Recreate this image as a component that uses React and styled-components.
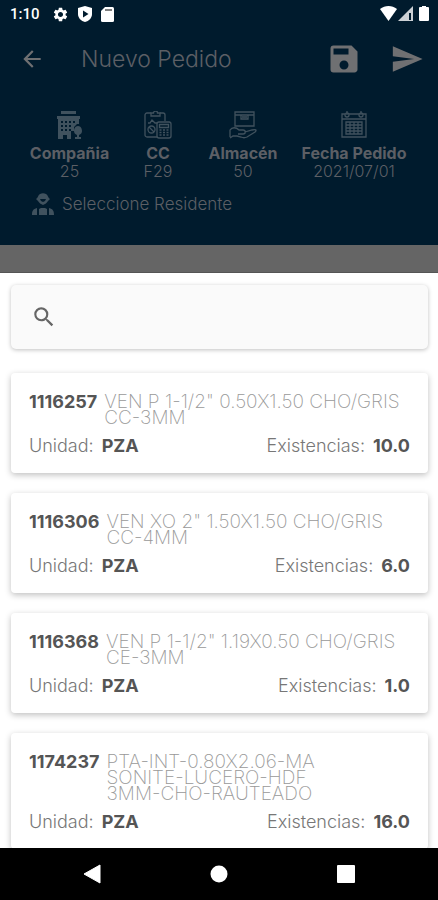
import React, { useState } from "react"
import styled, { createGlobalStyle } from "styled-components"
import { MdArrowBack, MdSave, MdSearch, MdSend, MdSettings } from "react-icons/md"

const articulos = [
  {
    clave: "1116257",
    descripcion: ['VEN P 1-1/2" 0.50X1.50 CHO/GRIS', "CC-3MM"],
    unidad: "PZA",
    existencias: "10.0",
  },
  {
    clave: "1116306",
    descripcion: ['VEN XO 2" 1.50X1.50 CHO/GRIS', "CC-4MM"],
    unidad: "PZA",
    existencias: "6.0",
  },
  {
    clave: "1116368",
    descripcion: ['VEN P 1-1/2" 1.19X0.50 CHO/GRIS', "CE-3MM"],
    unidad: "PZA",
    existencias: "1.0",
  },
  {
    clave: "1174237",
    descripcion: ["PTA-INT-0.80X2.06-MA", "SONITE-LUCERO-HDF", "3MM-CHO-RAUTEADO"],
    unidad: "PZA",
    existencias: "16.0",
  },
]

const CompaniaIcon = () => (
  <svg width="28" height="28" viewBox="0 0 28 28" fill="currentColor" aria-hidden="true">
    <path d="M5 0h15v3H5zM1 5h23v3H1z" />
    <path
      fillRule="evenodd"
      d="M2 8h21v5h-2l-3 3v4h-3v8h-4v-4H7v4H2zM5 10v2h2v-2zM9 10v2h2v-2zM13 10v2h2v-2zM17 10v2h2v-2zM5 14v2h2v-2zM9 14v2h2v-2zM13 14v2h2v-2zM5 18v2h2v-2zM9 18v2h2v-2zM13 18v2h2v-2z"
    />
    <path d="M22 15c3 0 4 3 4 5s-1 3-3 4v2h2v2h-6v-2h2v-2c-2-1-3-2-3-4s1-5 4-5z" />
  </svg>
)

const CentroIcon = () => (
  <svg width="28" height="28" viewBox="0 0 28 28" fill="none" stroke="currentColor" strokeWidth="1.3" aria-hidden="true">
    <path d="M13 26H3a2 2 0 0 1-2-2V4a2 2 0 0 1 2-2h4M16 2h3a2 2 0 0 1 2 2v6" />
    <path d="M7 5V2h2.500a2 2 0 0 1 4 0H16v3zM4 12h2l2-3 3 3h2" />
    <circle cx="7.500" cy="18.500" r="3.500" />
    <path d="m5 16 5 5" />
    <rect x="13" y="11" width="14" height="16" rx="2" />
    <path d="M15.500 13.500h9v3h-9zM15.500 19h2M19 19h2M22.500 19h2M15.500 21.500h2M19 21.500h2M22.500 21.500h2M15.500 24h2M19 24h2M22.500 24h2" />
  </svg>
)

const AlmacenIcon = () => (
  <svg width="28" height="28" viewBox="0 0 28 28" fill="none" stroke="currentColor" strokeWidth="1.3" aria-hidden="true">
    <path d="M6 1h19v14H6zM6 4h19M12 4v4h7V4M13 6h5" />
    <path d="M1 26v-7c2-3 6-3 9 0h4c3 0 3 4 0 4h-5M16 21l7-2c4-1 5 0 3 2l-8 5c-2 1-4 1-6 0l-4-1H4l-3 2" />
  </svg>
)

const FechaIcon = () => (
  <svg width="28" height="28" viewBox="0 0 28 28" fill="none" stroke="currentColor" strokeWidth="1.3" aria-hidden="true">
    <path d="M5 3H2v23h24V3h-3M9 3h10M2 8h24" />
    <circle cx="7" cy="4" r="2" />
    <circle cx="21" cy="4" r="2" />
    <path d="M7 0v4M21 0v4M6 11h16v12H6zM6 14h16M6 17h16M6 20h16M10 11v12M14 11v12M18 11v12" />
  </svg>
)

const ResidenteIcon = () => (
  <svg width="22" height="22" viewBox="0 0 22 22" fill="currentColor" aria-hidden="true">
    <path d="M4 6c2-1 2-4 4-5 2-1 4-1 6 0 2 1 2 4 4 5l-2 2c-1 2-3 3-5 4-2-1-4-2-5-4z" />
    <path d="M8 6h6l-1 2-2 1-2-1z" fill="#001b2d" />
    <path d="M0 22c0-4 1-6 5-7v7zM7 16l2-1h4l2 1v6H7zM17 15c4 1 5 3 5 7h-5z" />
  </svg>
)

const ShieldIcon = () => (
  <svg width="16" height="16" viewBox="0 0 16 16" aria-hidden="true">
    <path d="M8 0l7 2v6c0 4-3 7-7 8-4-1-7-4-7-8V2z" fill="#fff" />
    <path d="M6 4.500v7L11.500 8z" fill="#001b2d" />
  </svg>
)

const CardIcon = () => (
  <svg width="13" height="15" viewBox="0 0 13 15" aria-hidden="true">
    <path d="M4 0h7.500A1.500 1.500 0 0 1 13 1.500v12a1.500 1.500 0 0 1-1.500 1.500h-10A1.500 1.500 0 0 1 0 13.500V4z" fill="#fff" />
    <path d="M4 3h7" stroke="#555" strokeWidth="1.500" />
  </svg>
)

const SignalIcons = () => (
  <svg width="50" height="16" viewBox="0 0 50 16" fill="#fff" aria-hidden="true">
    <path d="M0 3c5-4 12-4 17 0L8.500 15z" />
    <path d="M33 0v15H18z" opacity=".8" />
    <path d="M30 7v7" stroke="#001b2d" strokeWidth="2" />
    <path d="M42 0h4v1h2a1 1 0 0 1 1 1v12a1 1 0 0 1-1 1h-8a1 1 0 0 1-1-1V2a1 1 0 0 1 1-1h2z" />
  </svg>
)

const App = () => {
  const [busqueda, setBusqueda] = useState("")
  const visibles = articulos.filter(a =>
    (a.clave + a.descripcion.join(" ")).toLowerCase().includes(busqueda.toLowerCase())
  )

  return (
    <Screen>
      <GlobalStyle />
      <Header>
        <StatusBar>
          <Clock>1:10</Clock>
          <MdSettings size={17} />
          <ShieldIcon />
          <CardIcon />
          <Signals><SignalIcons /></Signals>
        </StatusBar>
        <Toolbar>
          <IconButton aria-label="Regresar"><MdArrowBack size={26} /></IconButton>
          <Title>Nuevo Pedido</Title>
          <IconButton aria-label="Guardar"><MdSave size={36} /></IconButton>
          <IconButton aria-label="Enviar"><MdSend size={34} /></IconButton>
        </Toolbar>
        <DataGrid>
          <Dato><CompaniaIcon /><Label>Compañia</Label><Value>25</Value></Dato>
          <Dato><CentroIcon /><Label>CC</Label><Value>F29</Value></Dato>
          <Dato><AlmacenIcon /><Label>Almacén</Label><Value>50</Value></Dato>
          <Dato><FechaIcon /><Label>Fecha Pedido</Label><Value>2021/07/01</Value></Dato>
        </DataGrid>
        <Residente><ResidenteIcon />Seleccione Residente</Residente>
      </Header>
      <Backdrop />
      <Sheet>
        <SearchBox>
          <MdSearch size={26} />
          <SearchInput
            aria-label="Buscar"
            value={busqueda}
            onChange={e => setBusqueda(e.target.value)}
          />
        </SearchBox>
        <List>
          {visibles.map(a => (
            <Card key={a.clave}>
              <CardTop>
                <Strong>{a.clave}</Strong>
                <Description>{a.descripcion.join("\n")}</Description>
              </CardTop>
              <CardBottom>
                <Field>Unidad: <Strong>{a.unidad}</Strong></Field>
                <Field>Existencias: <Strong>{a.existencias}</Strong></Field>
              </CardBottom>
            </Card>
          ))}
        </List>
      </Sheet>
      <NavBar>
        <NavButton aria-label="Atrás">
          <svg width="18" height="20" viewBox="0 0 18 20"><path d="M17 1v18L1 10z" fill="#fff" stroke="#fff" strokeLinejoin="round" /></svg>
        </NavButton>
        <NavButton aria-label="Inicio">
          <svg width="18" height="18" viewBox="0 0 18 18"><circle cx="9" cy="9" r="8.500" fill="#fff" /></svg>
        </NavButton>
        <NavButton aria-label="Recientes">
          <svg width="18" height="18" viewBox="0 0 18 18"><rect width="18" height="18" rx="1" fill="#fff" /></svg>
        </NavButton>
      </NavBar>
    </Screen>
  )
}

export default App

const GlobalStyle = createGlobalStyle`
  * {
    box-sizing: border-box;
  }
  body {
    margin: 0;
    font-family: Inter, "Open Sans", sans-serif;
    background: #000;
  }
  button, input {
    font: inherit;
    color: inherit;
    background: none;
    border: 0;
    padding: 0;
  }
  svg {
    display: block;
    flex-shrink: 0;
  }
`

const Screen = styled.div`
  display: flex;
  flex-direction: column;
  height: 100vh;
`

const Header = styled.header`
  flex-shrink: 0;
  padding-bottom: 30px;
  background: #001b2d;
  color: #5c5f65;
`

const StatusBar = styled.div`
  display: flex;
  align-items: center;
  gap: 8px;
  height: 28px;
  padding: 0 8px 0 10px;
  color: #fff;
`

const Clock = styled.span`
  margin-right: 4px;
  font-family: Roboto, sans-serif;
  font-size: 15px;
  font-weight: 500;
`

const Signals = styled.div`
  margin-left: auto;
`

const Toolbar = styled.div`
  display: flex;
  align-items: center;
  gap: 28px;
  height: 62px;
  padding: 0 14px 0 19px;
`

const IconButton = styled.button`
  color: #6f7072;
`

const Title = styled.h1`
  flex: 1;
  margin: 0;
  padding-left: 8px;
  font-size: 23px;
  font-weight: 300;
`

const DataGrid = styled.div`
  display: grid;
  grid-template-columns: 91fr 86fr 84fr 138fr;
  margin-top: 21px;
  padding: 0 15px 0 24px;
`

const Dato = styled.div`
  display: flex;
  flex-direction: column;
  align-items: center;
  font-size: 16px;
  line-height: 18px;
  white-space: nowrap;

  svg {
    margin-bottom: 5px;
    color: #40525e;
  }
`

const Label = styled.span`
  font-weight: 700;
`

const Value = styled.span`
  font-weight: 300;
`

const Residente = styled.button`
  display: flex;
  align-items: center;
  gap: 8px;
  margin: 13px 0 0 32px;
  font-size: 17px;
  font-weight: 300;
  line-height: 22px;

  svg {
    color: #40525e;
  }
`

const Backdrop = styled.div`
  flex: 0 0 28px;
  background: #656565;
  border-bottom: 1px solid #555;
`

const Sheet = styled.main`
  flex: 1;
  min-height: 0;
  padding: 12px 10px 0 11px;
  overflow-y: auto;
  scrollbar-width: none;
  background: #fff;
`

const SearchBox = styled.label`
  display: flex;
  align-items: center;
  gap: 12px;
  height: 64px;
  padding: 0 20px;
  border-radius: 5px;
  background: #fafafa;
  box-shadow: 0 1px 4px rgba(0, 0, 0, 0.25);
  color: #666;
`

const SearchInput = styled.input`
  flex: 1;
  min-width: 0;
  height: 40px;
  font-size: 17px;
  outline: none;
`

const List = styled.ul`
  display: flex;
  flex-direction: column;
  gap: 20px;
  margin: 24px 0 0;
  padding: 0 0 20px;
  list-style: none;
`

const Card = styled.li`
  padding: 21px 18px 19px;
  border-radius: 4px;
  background: #fff;
  box-shadow: 0 2px 6px rgba(0, 0, 0, 0.25);
  color: #777;
  font-size: 18px;
  font-weight: 300;
  line-height: 16px;
`

const CardTop = styled.div`
  display: flex;
  gap: 7px;
`

const CardBottom = styled.div`
  display: flex;
  justify-content: space-between;
  margin-top: 12px;
`

const Description = styled.span`
  color: #999;
  font-size: 19px;
  font-weight: 200;
  white-space: pre-line;
`

const Field = styled.span`
  display: flex;
  gap: 8px;
`

const Strong = styled.strong`
  color: #555;
  font-weight: 700;
`

const NavBar = styled.nav`
  display: flex;
  flex: 0 0 52px;
  padding: 0 28px;
  background: #000;
`

const NavButton = styled.button`
  display: flex;
  flex: 1;
  align-items: center;
  justify-content: center;
`
